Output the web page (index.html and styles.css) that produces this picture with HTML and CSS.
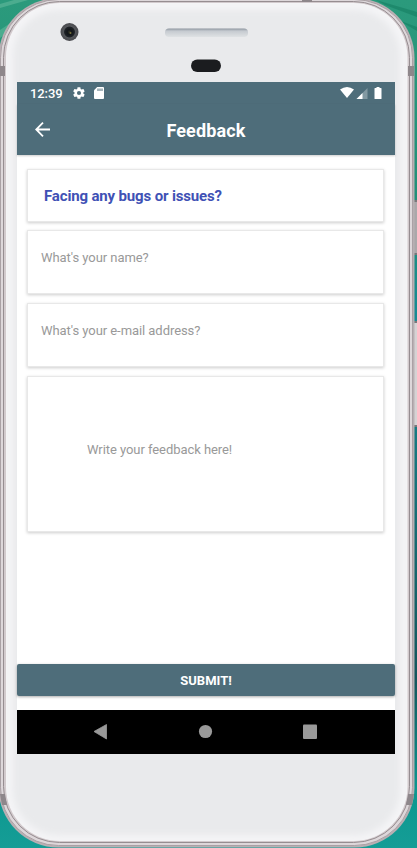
FILE: index.html
```
<!DOCTYPE html>
<html lang="en">
<head>
<meta charset="utf-8">
<title>Feedback</title>
<link rel="stylesheet" href="styles.css">
</head>
<body>
<div class="phone">
  <svg class="shell" width="417" height="848" viewBox="0 0 417 848" aria-hidden="true">
    <defs>
      <linearGradient id="sea" x1="0" y1="0" x2="0" y2="1">
        <stop offset="0" stop-color="#2b9a7c"/><stop offset=".25" stop-color="#218f78"/><stop offset=".37" stop-color="#168b93"/><stop offset=".8" stop-color="#15565c"/><stop offset=".93" stop-color="#0c978f"/><stop offset="1" stop-color="#159d96"/>
      </linearGradient>
      <linearGradient id="slot" x1="0" y1="0" x2="0" y2="1">
        <stop offset="0" stop-color="#8d959f"/><stop offset=".3" stop-color="#c5cad0"/><stop offset="1" stop-color="#dfe2e4"/>
      </linearGradient>
      <radialGradient id="lens">
        <stop offset="0" stop-color="#343527"/><stop offset=".25" stop-color="#111418"/><stop offset=".55" stop-color="#1e2226"/><stop offset=".65" stop-color="#55575b"/><stop offset="1" stop-color="#48494d"/>
      </radialGradient>
      <filter id="soft" x="-5%" y="-5%" width="110%" height="110%"><feGaussianBlur stdDeviation="3"/></filter>
      <clipPath id="faceClip"><rect x="6" y="3" width="401.500" height="838" rx="54"/></clipPath>
    </defs>
    <rect width="417" height="848" fill="url(#sea)"/>
    <path d="M0 8L28 0H14L0 4M0 30L12 22L8 32L0 38" fill="#62b99c" opacity=".6"/>
    <path d="M376 0L417 12V17L385 5M398 20L417 27V31" fill="#167f62" opacity=".6"/>
    <rect x="412" y="201" width="5" height="54" fill="#aaa8aa"/>
    <rect x="412" y="322" width="5" height="105" fill="#d5d3d4"/>
    <path d="M414 201h3M414 254h3M414 322h3M414 426h3" stroke="#77787a" stroke-width="2"/>
    <rect x="-1.500" y="-2" width="416" height="849.500" rx="60" fill="#b9afb3"/>
    <rect x=".5" y="-.5" width="412" height="846" rx="58" fill="#ddd7da" stroke="#aaa1a5"/>
    <rect x="3.500" y="1.500" width="406" height="841" rx="56" fill="#d2cacd" stroke="#968d91"/>
    <path d="M0 66h5v10H0M408 66h6v10h-6M302 0h10v2h-10M0 794h5l2 11H2M408 794h6l-2 11h-6" fill="#8e878b"/>
    <rect x="6" y="3" width="401.500" height="838" rx="54" fill="#f4f4f6"/>
    <g clip-path="url(#faceClip)"><rect x="13" y="10" width="387" height="825" rx="46" fill="#e9eaec" filter="url(#soft)"/></g>
    <circle cx="69.500" cy="32" r="9" fill="url(#lens)"/>
    <circle cx="70.500" cy="33" r="1" fill="#77713c"/>
    <rect x="165" y="28.500" width="83" height="8.500" rx="4" fill="url(#slot)"/>
    <rect x="191" y="59.500" width="30" height="12.500" rx="6.250" fill="#1b1c1f"/>
  </svg>
  <main class="screen">
    <div class="status">
      <span class="clock">12:39</span>
      <svg class="gear" width="14" height="14" viewBox="0 0 24 24"><path fill="#fff" d="M19.400 13a7.500 7.500 0 0 0 0-2l2.100-1.600c.2-.2.200-.4.100-.6l-2-3.500c-.1-.2-.4-.3-.6-.2l-2.500 1a7.300 7.300 0 0 0-1.700-1L14.400 2.400c0-.2-.2-.4-.5-.4h-4c-.2 0-.4.200-.5.400L9 5.100c-.6.200-1.200.6-1.700 1l-2.500-1c-.2-.1-.5 0-.6.200l-2 3.500c-.1.200-.1.400.1.600L4.500 11a7.500 7.500 0 0 0 0 2l-2.200 1.600c-.2.200-.2.400-.1.600l2 3.500c.1.200.4.300.6.200l2.500-1c.5.400 1.100.8 1.700 1l.4 2.700c.1.200.3.400.5.400h4c.3 0 .5-.2.500-.4l.4-2.700c.6-.2 1.200-.6 1.700-1l2.500 1c.2.100.5 0 .6-.2l2-3.500c.1-.2.100-.4-.1-.6zM12 15.500a3.500 3.500 0 1 1 0-7 3.500 3.500 0 0 1 0 7z"/></svg>
      <svg class="sd" width="10" height="12" viewBox="0 0 10 12"><path fill="#fff" d="M3.200 0H9a1 1 0 0 1 1 1v10a1 1 0 0 1-1 1H1a1 1 0 0 1-1-1V3.200z"/><path d="M4 1.500v2.500M6 1.500v2.500M8 1.500v2.500" stroke="#4e6d7a"/></svg>
      <svg class="signals" width="42" height="12" viewBox="0 0 42 12"><path d="M0 2.500Q7-2.500 14 2.500L7 11z" fill="#fff"/><path d="M27.500 1v11h-11z" fill="#8299a2"/><path d="M22.500 6v6h-6z" fill="#fff"/><path d="M36.500 0h3v1H41a.5.500 0 0 1 .5.500v10a.5.500 0 0 1-.5.500h-6a.5.500 0 0 1-.5-.5v-10A.5.500 0 0 1 35 1h1.500z" fill="#fff"/></svg>
    </div>
    <header class="bar">
      <svg class="back" width="15" height="15" viewBox="0 0 15 15"><path d="M8 .7L1.200 7.500L8 14.300M1.200 7.500H15" fill="none" stroke="#fff" stroke-width="1.800"/></svg>
      <h1 class="title">Feedback</h1>
    </header>
    <section class="form">
      <div class="card heading">Facing any bugs or issues?</div>
      <div class="card field">What's your name?</div>
      <div class="card field">What's your e-mail address?</div>
      <div class="card message">Write your feedback here!</div>
    </section>
    <button class="submit">SUBMIT!</button>
    <nav class="nav">
      <svg width="378" height="44" viewBox="0 0 378 44"><path d="M77 21.500L89.500 14.500V29z" fill="#999" stroke="#999" stroke-linejoin="round" stroke-width=".8"/><circle cx="188.500" cy="21.500" r="6.600" fill="#999"/><rect x="286" y="14.500" width="14" height="14.500" rx="1" fill="#999"/></svg>
    </nav>
  </main>
</div>
</body>
</html>
```

FILE: styles.css
```
* { box-sizing: border-box; }
body { margin: 0; font-family: Roboto, sans-serif; overflow: hidden; }
.phone { position: relative; width: 417px; height: 848px; padding: 82px 22px 94px 17px; }
.shell { position: absolute; left: 0; top: 0; }
.screen { position: relative; display: flex; flex-direction: column; width: 378px; height: 672px; background: #fff; }
.status { display: flex; align-items: center; height: 22px; padding: 0 13px; background: #4e6d7a; color: #fff; }
.clock { width: 42px; padding-top: 1px; font-size: 13px; line-height: 21px; letter-spacing: -.1px; font-weight: 500; }
.gear { margin-right: 9px; }
.sd { margin-left: -1px; }
.signals { margin-left: auto; }
.bar { display: grid; grid-template-columns: 40px 1fr 40px; align-items: center; height: 51px; background: #4e6d7a; box-shadow: 0 1px 2px #0003; }
.back { margin-left: 18px; }
.title { margin: 0; padding-top: 2px; color: #fff; font-size: 18px; line-height: 24px; letter-spacing: .15px; font-weight: 700; text-align: center; }
.form { display: flex; flex-direction: column; gap: 9px; flex: 1; padding: 14px 11px 0 10px; }
.card { display: flex; border: 1px solid #e8e8e8; background: #fff; box-shadow: 0 1px 3px #0003; color: #999; font-size: 13px; line-height: 18px; letter-spacing: -.06px; white-space: nowrap; }
.heading { height: 53px; padding: 17px 16px; color: #3f51b5; font-size: 15px; font-weight: 700; letter-spacing: -.15px; margin-bottom: -1px; }
.field { height: 64px; padding: 18px 13px; }
.message { height: 156px; padding: 64px 59px; }
.submit { height: 32px; margin: 0 0 14px; padding: 1px 0 0; border: 0; border-radius: 2px; background: #4e6d7a; color: #fff; box-shadow: 0 1px 3px #0005; font: 700 13px/31px Roboto, sans-serif; text-align: center; }
.nav { height: 44px; background: #000; }
.nav svg { display: block; }
```
